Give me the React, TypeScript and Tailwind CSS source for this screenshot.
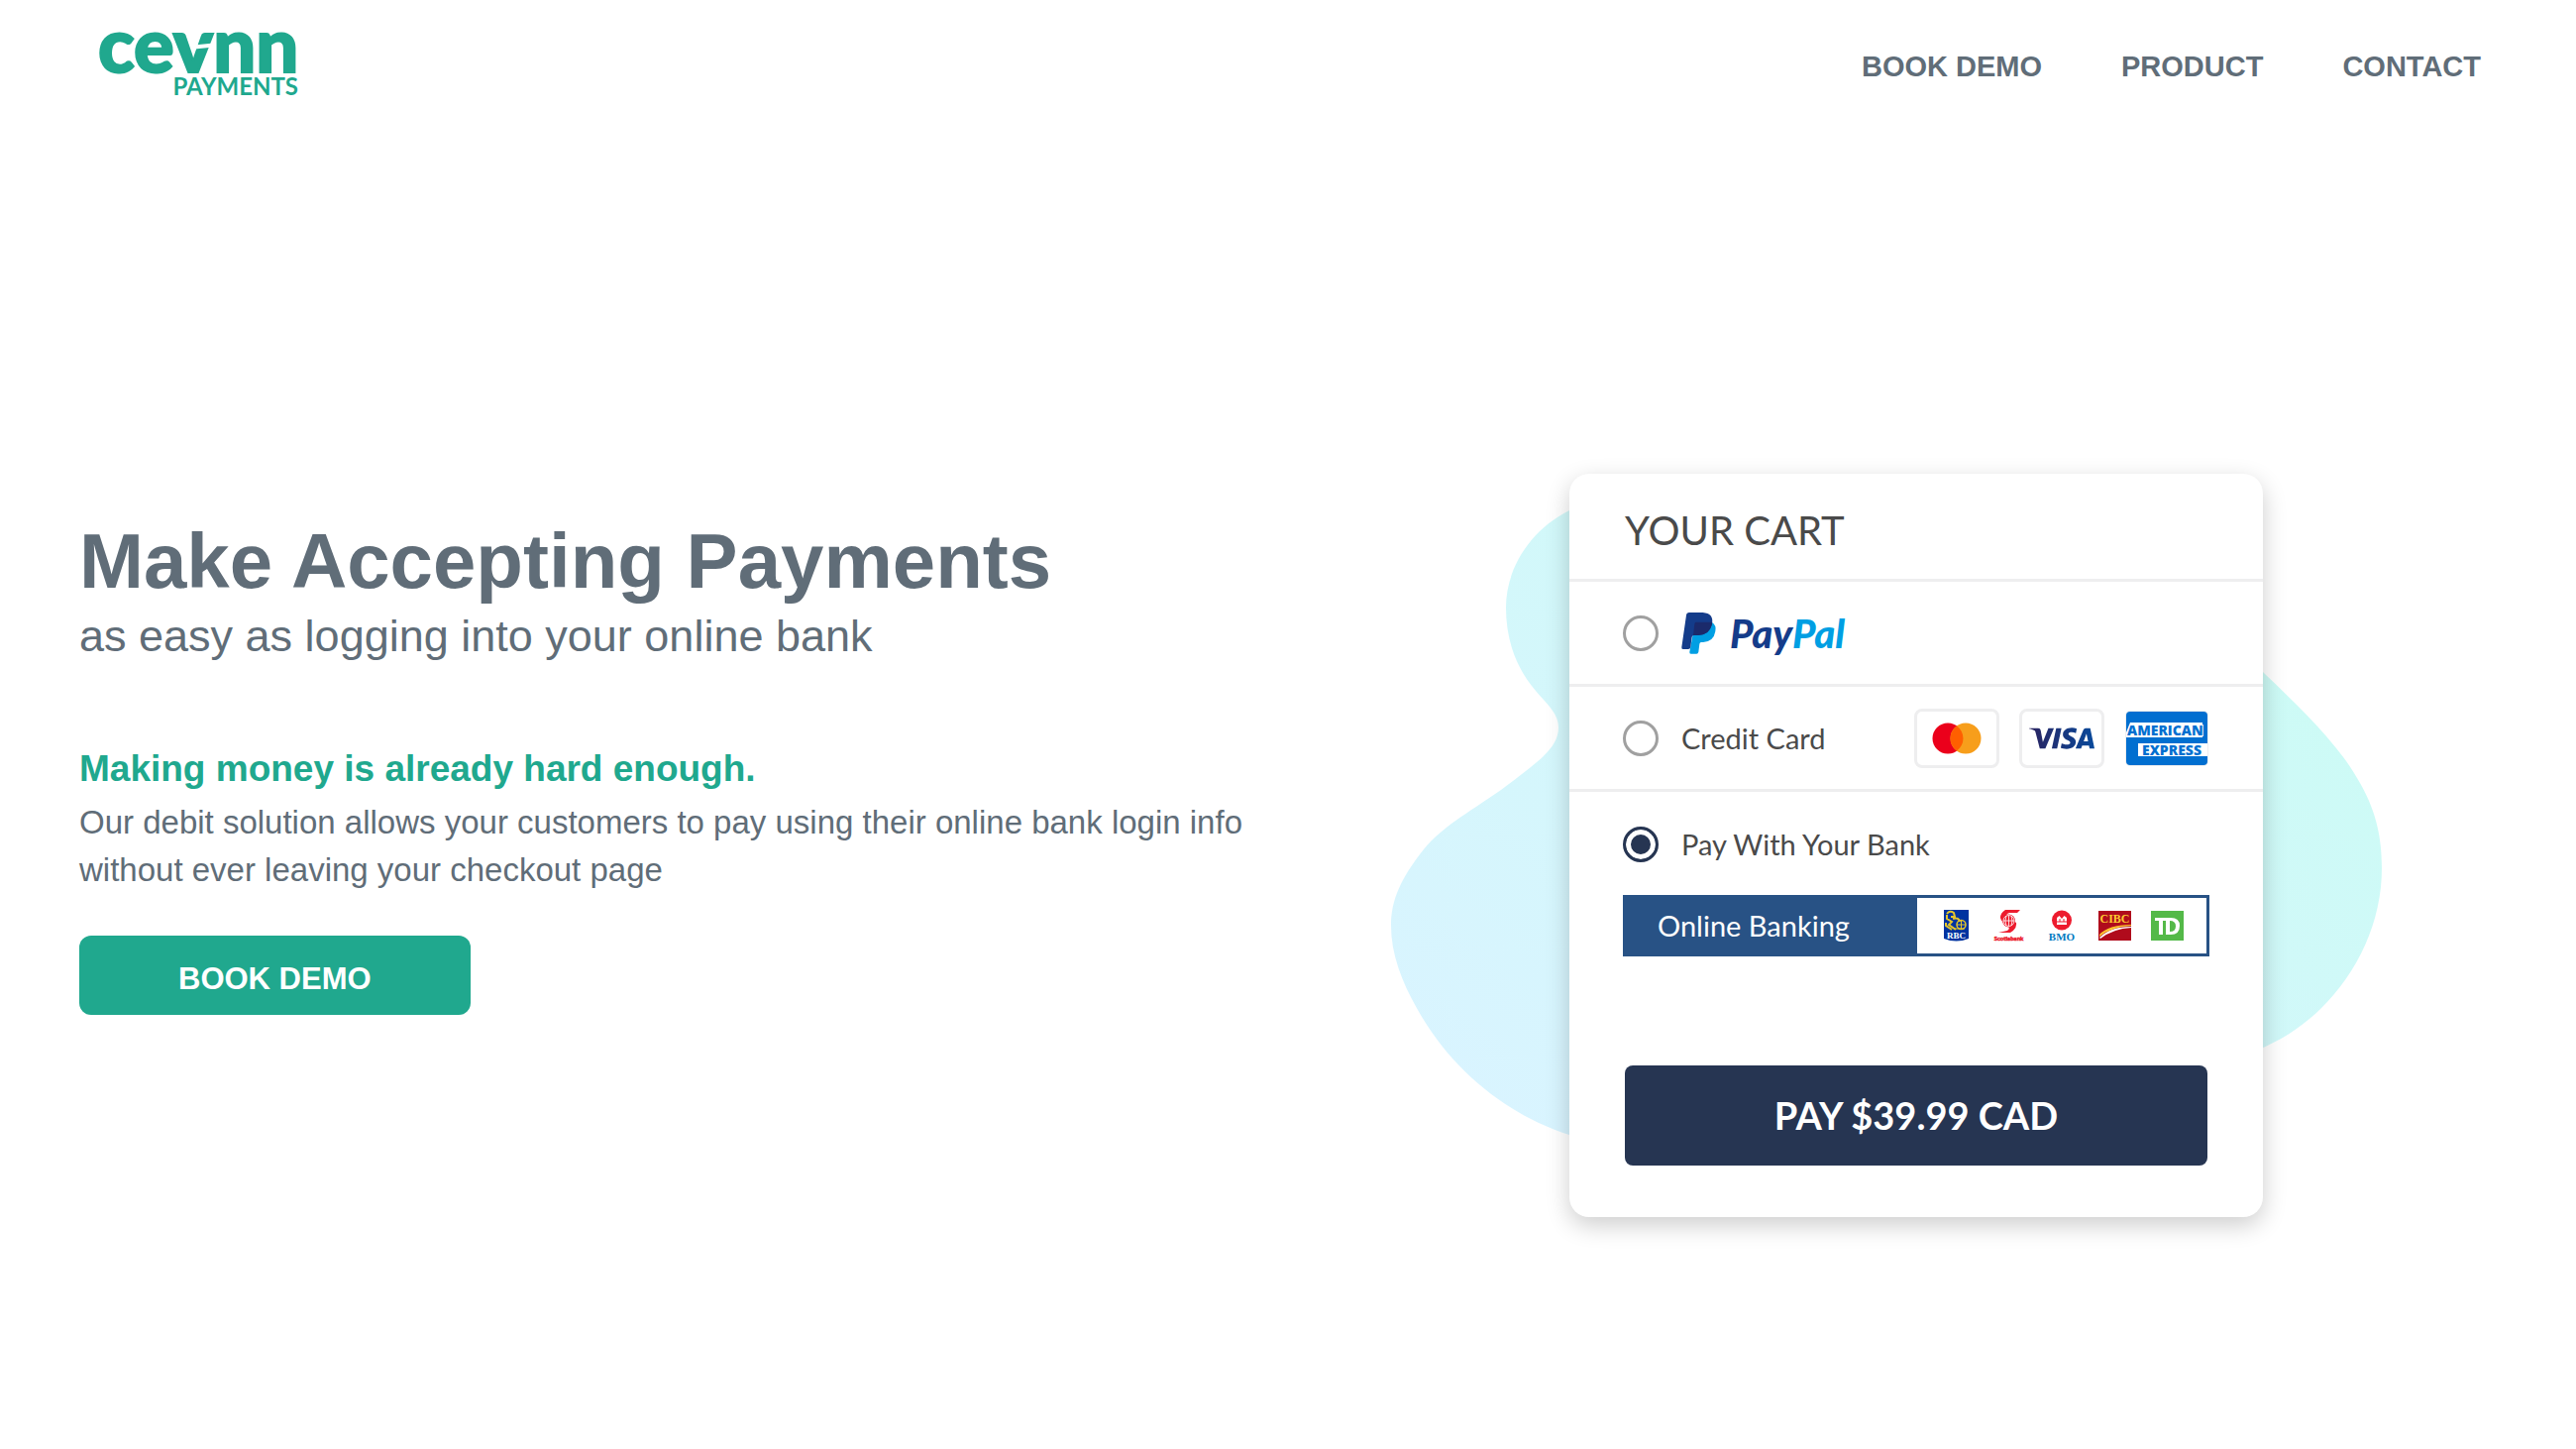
import type { ReactNode } from "react";
import { SiVisa } from "react-icons/si";

function CevnnLogo() {
  return (
    <svg viewBox="0 0 204 64" className="h-16 w-51 overflow-visible" role="img" aria-label="Cevnn Payments">
      <g fill="#20a88e" fontFamily="Lato, sans-serif">
        <text x="0" y="37" fontSize="76" fontWeight="900" stroke="#20a88e" strokeWidth="2">
          cevnn
        </text>
        <text x="202" y="60" fontSize="24" fontWeight="700" textAnchor="end">
          PAYMENTS
        </text>
      </g>
      <path d="M97 11.500L117 9.500" stroke="#fff" strokeWidth="4" />
    </svg>
  );
}

function PayPalLogo() {
  return (
    <svg viewBox="0 0 172 48" className="h-12 w-43 overflow-visible" role="img" aria-label="PayPal">
      <g transform="translate(0 3) scale(.3333)">
        <path d="M42 29H92Q107 38 103 57Q98 88 66 90H60Q56 90 55 95L52 119Q51 125 46 125H29Q24 125 25 119Z" fill="#009fe3" />
        <path d="M24 0H65Q99 3 93 34Q86 68 51 69H38Q33 69 32 74L28 104Q27 111 21 111H5Q0 111 1 105L15 8Q16 0 24 0Z" fill="#143c8a" />
        <path d="M44 29H93Q94 33 92 39Q84 68 51 69H36L40 35Q41 29 44 29Z" fill="#1b2a6b" />
      </g>
      <text
        x="49"
        y="39"
        fontSize="40"
        fontWeight="900"
        fontStyle="italic"
        fontFamily="Lato, sans-serif"
        fill="#143c8a"
      >
        Pay<tspan fill="#009fe3">Pal</tspan>
      </text>
    </svg>
  );
}

function CardFrame({ children }: { children: ReactNode }) {
  return (
    <span className="flex h-15 w-[86px] items-center justify-center rounded-lg border-3 border-[#eeeeef] bg-white">
      {children}
    </span>
  );
}

function Mastercard() {
  return (
    <svg viewBox="0 0 50 32" className="h-8 w-[50px]" role="img" aria-label="Mastercard">
      <circle cx="16" cy="16" r="15.500" fill="#eb001b" />
      <circle cx="34" cy="16" r="15.500" fill="#f79e1b" />
      <path d="M25 3.400a15.500 15.500 0 0 1 0 25.200a15.500 15.500 0 0 1 0-25.200Z" fill="#ff5f00" />
    </svg>
  );
}

function Visa() {
  return (
    <>
      <svg className="absolute size-0" aria-hidden="true">
        <linearGradient id="visa-blue">
          <stop stopColor="#2a2360" />
          <stop offset="1" stopColor="#08499b" />
        </linearGradient>
      </svg>
      <SiVisa fill="url(#visa-blue)" className="size-[66px] shrink-0" role="img" aria-label="Visa" />
    </>
  );
}

function Amex() {
  return (
    <svg viewBox="0 0 86 60" className="h-15 w-[86px]" role="img" aria-label="American Express">
      <defs>
        <clipPath id="amex-edge">
          <rect x="2" y="3" width="82" height="54" rx="4" />
        </clipPath>
      </defs>
      <rect x="1" y="2" width="84" height="56" rx="5" fill="#eeeeef" />
      <g clipPath="url(#amex-edge)">
        <rect width="86" height="60" fill="#016fd0" />
        <path d="M2 27V24L6 14H79V29H2ZM14 35H84V48H14Z" fill="#fff" />
        <g
          fontFamily="Open Sans, sans-serif"
          fontWeight="800"
          fontSize="14"
          fill="#016fd0"
          stroke="#fff"
          strokeWidth="2"
          paintOrder="stroke"
        >
          <text x="3" y="27">AMERICAN</text>
          <text x="18" y="47">EXPRESS</text>
        </g>
      </g>
    </svg>
  );
}

function BankLogos() {
  return (
    <svg viewBox="0 0 246 34" className="ml-1 h-[34px] w-[246px]" role="img" aria-label="RBC, Scotiabank, BMO, CIBC, TD">
      <path d="M2 1H27V30Q14.500 35 2 30Z" fill="#0033a0" />
      <g fill="none" stroke="#e4c52c" strokeWidth="2">
        <path d="M5 5Q8 1 12 4L13 8H9M5 6V10L10 13L7 16L14 21M11 10Q17 8 18 13M4 14V17L10 21" />
        <circle cx="19.500" cy="16" r="4.500" strokeWidth="1.500" />
        <path d="M15 16H24M19.500 12V20M12 20H23" strokeWidth="1" />
      </g>
      <text x="14.500" y="30" textAnchor="middle" fontSize="9" fontWeight="700" fontFamily="Liberation Serif, serif" fill="#fff">
        RBC
      </text>

      <path d="M79 1H64Q59 4 59 9Q60 14 67 17Q69 20 66 22L57 24H69Q76 20 75 14L66 8Q64 5 68 4L76 4Z" fill="#ec1c2e" />
      <circle cx="67.500" cy="12" r="6.500" fill="#ec1c2e" />
      <g fill="none" stroke="#fff" strokeWidth=".8">
        <circle cx="67.500" cy="12" r="5.500" />
        <path d="M62 12H73M67.500 6.500V17.500M65 7Q63 12 65 17M70 7Q72 12 70 17" />
      </g>
      <text x="67.500" y="32" textAnchor="middle" fontSize="6" fontWeight="900" fontFamily="Lato, sans-serif" fill="#ec1c2e" stroke="#ec1c2e" strokeWidth=".5">
        Scotiabank
      </text>

      <circle cx="121" cy="11.500" r="10" fill="#ed1b2e" />
      <path d="M116 16V9L118.500 7L121 10L123.500 7L126 9V16Z" fill="#fff" />
      <path d="M116 13H126M119 10V13M123 10V13" stroke="#ed1b2e" strokeWidth="1" />
      <text x="121" y="32" textAnchor="middle" fontSize="11" fontWeight="700" fontFamily="Liberation Serif, serif" fill="#0079c1">
        BMO
      </text>

      <rect x="158" y="2" width="33" height="30" fill="#b00b1c" />
      <text x="174.500" y="14" textAnchor="middle" fontSize="12" fontWeight="700" fontFamily="Liberation Serif, serif" fill="#fdc82f">
        CIBC
      </text>
      <path d="M159 29Q170 18 191 18V19Q173 20 160 30Z" fill="#fff" />
      <path d="M159 26Q168 16 191 16V17Q171 18 159 28Z" fill="#fdc82f" />

      <rect x="211" y="2" width="33" height="30" fill="#54b948" />
      <path d="M215 9H231Q240 9 240 17Q240 26 231 26H226V12H223V26H219V12H215ZM230 12V23Q236 23 236 17.500Q236 12 230 12Z" fill="#fff" fillRule="evenodd" />
    </svg>
  );
}

function Blob() {
  return (
    <svg viewBox="0 0 1060 680" className="absolute top-0 left-1/2 h-[680px] w-[1060px] -translate-x-1/2" aria-hidden="true">
      <defs>
        <linearGradient id="blob-fill" x1=".05" y1=".9" x2=".95" y2=".2">
          <stop stopColor="#d9f4ff" />
          <stop offset="1" stopColor="#ccfbf5" />
        </linearGradient>
      </defs>
      <path
        d="M180 37C140 57 116 96 116 135C116 168 126 195 146 219C160 235 169 243 169 256C169 277 148 291 111 319C75 344 52 356 33 379C10 408 0 430 0 456C0 485 11 513 27 541C60 600 115 646 180 667L880 579C950 549 1000 475 1000 398C1000 366 994 338 975 307C955 272 918 236 880 200C700 60 450 20 180 37Z"
        fill="url(#blob-fill)"
      />
    </svg>
  );
}

function PaymentOption({
  id,
  label,
  checked,
  children,
}: {
  id: string;
  label: ReactNode;
  checked?: boolean;
  children?: ReactNode;
}) {
  return (
    <div className="flex h-[106px] items-center px-[54px]">
      <input
        id={id}
        type="radio"
        name="payment-method"
        defaultChecked={checked}
        className="size-9 shrink-0 appearance-none rounded-full border-3 border-[#a0a0a0] bg-white checked:border-[#263552] checked:bg-[#263552] checked:ring-5 checked:ring-white checked:ring-inset"
      />
      <label htmlFor={id} className="ml-[23px] text-[29px] text-[#4a4a4a]">
        {label}
      </label>
      {children}
    </div>
  );
}

function Cart() {
  return (
    <form
      className="relative w-[700px] divide-y-3 divide-[#eeeeef] rounded-[20px] bg-white pb-[52px] font-[Lato,sans-serif] shadow-[0_8px_24px_rgba(0,0,0,0.2)]"
      onSubmit={(e) => e.preventDefault()}
    >
      <h2 className="flex h-[109px] items-center px-14 pt-2 text-[40px] text-[#4a4a4a]">YOUR CART</h2>
      <PaymentOption id="paypal" label={<PayPalLogo />} />
      <PaymentOption id="credit-card" label="Credit Card">
        <div className="ml-auto flex gap-5">
          <CardFrame>
            <Mastercard />
          </CardFrame>
          <CardFrame>
            <Visa />
          </CardFrame>
          <Amex />
        </div>
      </PaymentOption>
      <div>
        <PaymentOption id="bank" label="Pay With Your Bank" checked />
        <div className="mx-[54px] -mt-0.5 flex h-[62px] border-3 border-[#285285] bg-white">
          <button type="button" className="w-[294px] bg-[#285285] pl-8 text-left text-[29px] text-white">
            Online Banking
          </button>
          <div className="flex flex-1 items-center justify-center">
            <BankLogos />
          </div>
        </div>
        <div className="mx-14 mt-[110px]">
          <button type="submit" className="h-[101px] w-full rounded-lg bg-[#263552] text-[38px] font-bold text-white">
            PAY $39.99 CAD
          </button>
        </div>
      </div>
    </form>
  );
}

export default function App() {
  return (
    <div className="min-h-screen bg-white font-['Liberation_Sans',Arial,sans-serif] text-[#606d78]">
      <header className="flex h-34 items-center justify-between pr-24 pl-[99px]">
        <a href="#home">
          <CevnnLogo />
        </a>
        <nav className="flex gap-20 text-[29px] font-bold">
          <a href="#demo">BOOK DEMO</a>
          <a href="#product">PRODUCT</a>
          <a href="#contact">CONTACT</a>
        </nav>
      </header>
      <main className="grid grid-cols-2 items-start pt-[342px] pr-12 pb-20 pl-20">
        <section className="pt-11">
          <h1 className="text-[78px] leading-[88px] font-bold">Make Accepting Payments</h1>
          <p className="text-[45px] leading-[64px]">as easy as logging into your online bank</p>
          <h2 className="mt-18 text-[37px] leading-[60px] font-bold text-[#20a88e]">
            Making money is already hard enough.
          </h2>
          <p className="text-[33px] leading-12">
            Our debit solution allows your customers to pay using their online bank login info without ever leaving your
            checkout page
          </p>
          <button
            type="button"
            className="mt-[42px] h-20 rounded-xl bg-[#20a88e] px-25 pt-2 text-[31px] font-bold text-white"
          >
            BOOK DEMO
          </button>
        </section>
        <section className="relative flex justify-center">
          <Blob />
          <Cart />
        </section>
      </main>
    </div>
  );
}
